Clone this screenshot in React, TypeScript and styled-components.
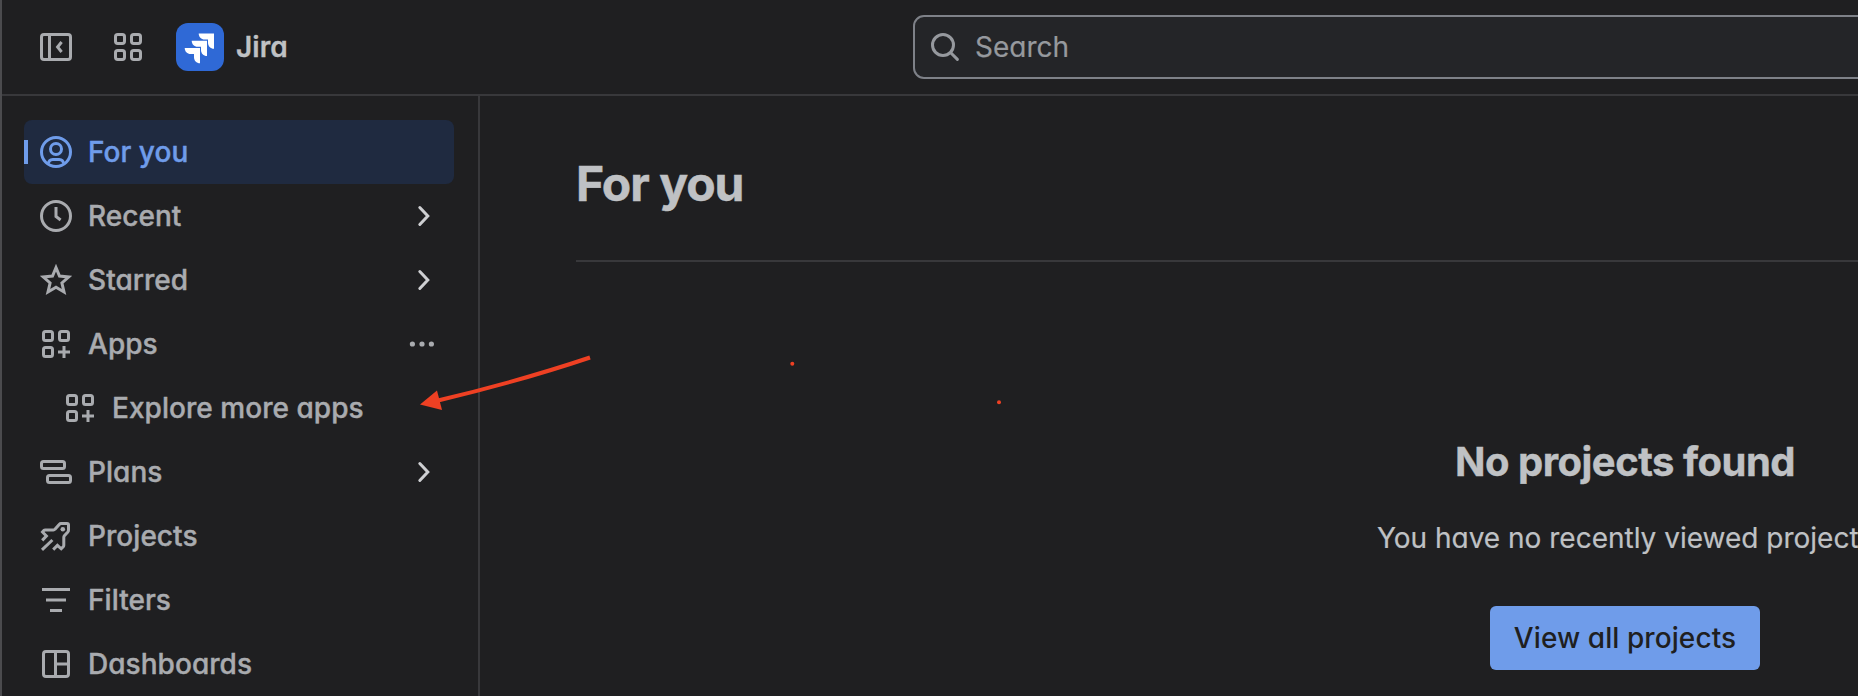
import React from "react";
import styled, { createGlobalStyle, css } from "styled-components";

const GlobalStyle = createGlobalStyle`
  * { box-sizing: border-box; }
  body {
    margin: 0;
    background: #1f1f21;
    color: #bfc1c4;
    font-family: Inter, "Liberation Sans", sans-serif;
    font-feature-settings: "cv11" 1;
    font-size: 28px;
    line-height: 40px;
    overflow: hidden;
  }
`;

const Page = styled.div`
  position: relative;
  display: flex;
  flex-direction: column;
  height: 696px;
  border-left: 2px solid #4b4b4e;
  overflow: hidden;
`;

const Header = styled.header`
  display: flex;
  align-items: center;
  flex: none;
  height: 96px;
  padding-left: 38px;
  border-bottom: 2px solid #38383b;
  color: #a9abaf;
`;

const IconSvg = styled.svg`
  display: block;
  flex: none;
  width: 32px;
  height: 32px;
  fill: none;
  stroke: currentColor;
  stroke-width: 1.5;
`;

const HeaderGroup = styled.div`
  display: flex;
  align-items: center;
  flex: none;
  width: 873px;
  gap: 40px;
`;

const Brand = styled.div`
  display: flex;
  align-items: center;
  gap: 12px;
  margin-left: -8px;
  color: #bfc1c4;
  font-weight: 600;
  letter-spacing: 0.1px;
  -webkit-text-stroke: 0.3px currentColor;
`;

const Logo = styled.svg`
  display: block;
  width: 48px;
  height: 48px;
`;

const SearchBox = styled.div`
  display: flex;
  align-items: center;
  flex: none;
  gap: 14px;
  width: 1560px;
  height: 64px;
  padding-left: 14px;
  border: 2px solid #7e8188;
  border-radius: 11px;
  background: #242528;
  color: #96999e;
  -webkit-text-stroke: 0.2px currentColor;
`;

const Body = styled.div`
  display: flex;
  flex: 1;
  min-height: 0;
`;

const Sidebar = styled.nav`
  flex: none;
  width: 478px;
  padding: 24px 24px 0 22px;
  border-right: 2px solid #38383b;
`;

const NavRow = styled.a<{ $active?: boolean; $nested?: boolean }>`
  position: relative;
  display: flex;
  align-items: center;
  gap: 16px;
  width: 430px;
  height: 64px;
  padding: 0 14px 0 ${(p) => (p.$nested ? 40 : 16)}px;
  border-radius: 8px;
  color: #a9abaf;
  font-weight: 500;
  ${(p) =>
    p.$active &&
    css`
      background: #1f2a40;
      color: #6f9cea;
      &::before {
        content: "";
        position: absolute;
        left: 0;
        top: 20px;
        width: 4px;
        height: 24px;
        background: #6f9cea;
      }
    `}
`;

const NavLabel = styled.span`
  flex: 1;
  white-space: nowrap;
  letter-spacing: 0.04px;
  -webkit-text-stroke: 0.4px currentColor;
`;

const Trailing = styled(IconSvg)<{ $light?: boolean }>`
  color: ${(p) => (p.$light ? "#cecfd2" : "#a9abaf")};
`;

const Main = styled.main`
  flex: none;
  width: 2290px;
  padding: 60px 0 0 96px;
`;

const Title = styled.h1`
  margin: 0;
  height: 106px;
  border-bottom: 2px solid #38383b;
  font-size: 48px;
  line-height: 56px;
  font-weight: 700;
  letter-spacing: -1px;
  -webkit-text-stroke: 0.5px currentColor;
`;

const EmptyState = styled.section`
  display: flex;
  flex-direction: column;
  align-items: center;
  width: 2098px;
  padding-top: 176px;
`;

const EmptyTitle = styled.h2`
  margin: 0 0 32px;
  font-size: 40px;
  line-height: 48px;
  font-weight: 700;
  letter-spacing: -0.5px;
  -webkit-text-stroke: 0.4px currentColor;
`;

const EmptyText = styled.p`
  margin: 0 0 48px;
  white-space: nowrap;
  -webkit-text-stroke: 0.2px currentColor;
`;

const Button = styled.button`
  width: 270px;
  height: 64px;
  padding: 0;
  border: 0;
  border-radius: 6px;
  background: #6f9cea;
  color: #1f1f21;
  font: inherit;
  font-feature-settings: inherit;
  font-weight: 500;
  letter-spacing: 0.08px;
  white-space: nowrap;
`;

const Annotation = styled.svg`
  position: absolute;
  left: -2px;
  top: 0;
  width: 1858px;
  height: 696px;
  pointer-events: none;
`;

const Icon = ({ children }: { children: React.ReactNode }) => (
  <IconSvg viewBox="0 0 16 16">{children}</IconSvg>
);

const AppsAddIcon = () => (
  <Icon>
    <rect x="1.75" y="1.75" width="4.5" height="4.5" rx="1" />
    <rect x="9.75" y="1.75" width="4.5" height="4.5" rx="1" />
    <rect x="1.75" y="9.75" width="4.5" height="4.5" rx="1" />
    <path d="M12 9v6M9 12h6" />
  </Icon>
);

const Chevron = () => (
  <Trailing viewBox="0 0 16 16" $light>
    <path d="M5.9 3.75 9.9 8l-4 4.25" strokeLinecap="round" />
  </Trailing>
);

const More = () => (
  <Trailing viewBox="0 0 16 16">
    <g fill="currentColor" stroke="none">
      <circle cx="2.2" cy="8" r="1.3" />
      <circle cx="7" cy="8" r="1.3" />
      <circle cx="11.7" cy="8" r="1.3" />
    </g>
  </Trailing>
);

export default function App() {
  return (
    <>
      <GlobalStyle />
      <Page>
        <Header>
          <HeaderGroup>
            <Icon>
              <rect x="0.75" y="1.75" width="14.5" height="12.5" rx="1.25" />
              <path d="M4.75 2v12M10.8 5.5 8.8 8l2 2.5" />
            </Icon>
            <Icon>
              <rect x="1.75" y="1.75" width="4.5" height="4.5" rx="1.1" />
              <rect x="9.75" y="1.75" width="4.5" height="4.5" rx="1.1" />
              <rect x="1.75" y="9.75" width="4.5" height="4.5" rx="1.1" />
              <rect x="9.75" y="9.75" width="4.5" height="4.5" rx="1.1" />
            </Icon>
            <Brand>
              <Logo viewBox="0 0 48 48">
                <rect width="48" height="48" rx="12" fill="#2f69d6" />
                <path
                  fill="#fff"
                  d="M22.7 10.5H38v15.3c-3.5 0-6-2.6-6-6V16.5h-3.3c-3.5 0-6-2.6-6-6ZM15.7 17.7H31v15.3c-3.5 0-6-2.6-6-6v-3.3h-3.3c-3.5 0-6-2.6-6-6ZM8.7 25H24v15.3c-3.5 0-6-2.6-6-6V31h-3.3c-3.5 0-6-2.6-6-6Z"
                />
              </Logo>
              Jira
            </Brand>
          </HeaderGroup>
          <SearchBox>
            <Icon>
              <circle cx="7" cy="7" r="5.25" />
              <path d="m11 11 3.2 3.2" strokeLinecap="round" />
            </Icon>
            Search
          </SearchBox>
        </Header>
        <Body>
          <Sidebar>
            <NavRow $active>
              <Icon>
                <circle cx="8" cy="8" r="7.25" />
                <circle cx="8" cy="6.5" r="2.75" />
                <path d="M4.2 13.8a2.3 2.3 0 0 1 2.2-2.05h3.2a2.3 2.3 0 0 1 2.2 2.05" />
              </Icon>
              <NavLabel>For you</NavLabel>
            </NavRow>
            <NavRow>
              <Icon>
                <circle cx="8" cy="8" r="7.25" />
                <path d="M8 3.5V8.2l2.3 1.8" />
              </Icon>
              <NavLabel>Recent</NavLabel>
              <Chevron />
            </NavRow>
            <NavRow>
              <Icon>
                <path d="m8 1.8 1.75 4.2 4.65.45-3.45 3.05 1.05 4.5L8 11.6 4 14l1.05-4.5L1.6 6.45 6.25 6Z" />
              </Icon>
              <NavLabel>Starred</NavLabel>
              <Chevron />
            </NavRow>
            <NavRow>
              <AppsAddIcon />
              <NavLabel>Apps</NavLabel>
              <More />
            </NavRow>
            <NavRow $nested>
              <AppsAddIcon />
              <NavLabel>Explore more apps</NavLabel>
            </NavRow>
            <NavRow>
              <Icon>
                <rect x="0.75" y="2.75" width="11.5" height="3.5" rx="1" />
                <rect x="3.75" y="9.75" width="11.5" height="3.5" rx="1" />
              </Icon>
              <NavLabel>Plans</NavLabel>
              <Chevron />
            </NavRow>
            <NavRow>
              <Icon>
                <path d="M1.1 10.2 3.2 8 1.25 6 1.9 5.25Q2.2 5 2.6 5H6.7Q7.2 5 7.5 4.6L9.6 2.2Q10 1.75 10.5 1.75H13.5Q14.25 1.75 14.25 2.5V5Q14.25 5.6 13.9 6L12.2 7.8Q11.9 8.2 11.9 8.7V12.6Q11.9 13 11.6 13.4L10.6 14.4 8.7 12.7 6.6 14.8" />
                <path d="M1 14.9 6.2 10" />
                <circle cx="11.4" cy="4.6" r="1.15" fill="currentColor" stroke="none" />
              </Icon>
              <NavLabel>Projects</NavLabel>
            </NavRow>
            <NavRow>
              <Icon>
                <path d="M1 2.75h14M3 8h10M5 13.25h6" />
              </Icon>
              <NavLabel>Filters</NavLabel>
            </NavRow>
            <NavRow>
              <Icon>
                <rect x="1.75" y="1.75" width="12.5" height="12.5" rx="1.25" />
                <path d="M7.75 2v12M8 8h6" />
              </Icon>
              <NavLabel>Dashboards</NavLabel>
            </NavRow>
          </Sidebar>
          <Main>
            <Title>For you</Title>
            <EmptyState>
              <EmptyTitle>No projects found</EmptyTitle>
              <EmptyText>You have no recently viewed projects</EmptyText>
              <Button>View all projects</Button>
            </EmptyState>
          </Main>
        </Body>
        <Annotation viewBox="0 0 1858 696">
          <path d="M590 357.5Q520 381 438 400.5" fill="none" stroke="#ee4023" strokeWidth="4" />
          <path d="M420 404.5 437 390.5 442 410Z" fill="#ee4023" />
          <circle cx="792.3" cy="363.7" r="2" fill="#ee4023" />
          <circle cx="999" cy="402.3" r="2" fill="#ee4023" />
        </Annotation>
      </Page>
    </>
  );
}
